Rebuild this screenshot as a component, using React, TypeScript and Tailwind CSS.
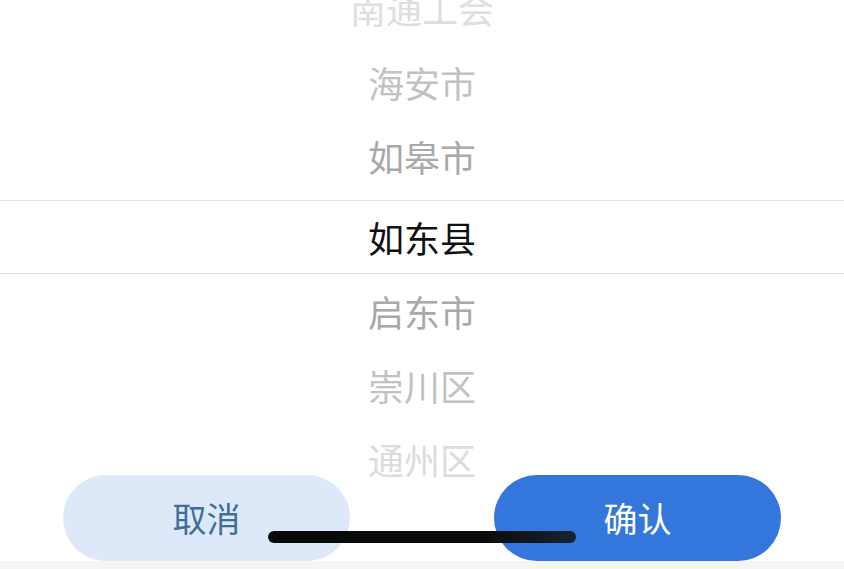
import React from "react";

const rows: { t: string; c: string; h: string }[] = [
  { t: "南通工会", c: "text-[#dedede]", h: "h-[74px]" },
  { t: "海安市", c: "text-[#c2c2c2]", h: "h-[74px]" },
  { t: "如皋市", c: "text-[#a9a9a9] pb-[7px]", h: "h-[81px]" },
  { t: "如东县", c: "text-[#111111] border-y border-[#e2e2e2]", h: "h-[74px]" },
  { t: "启东市", c: "text-[#a9a9a9]", h: "h-[74px]" },
  { t: "崇川区", c: "text-[#c2c2c2]", h: "h-[74px]" },
  { t: "通州区", c: "text-[#dcdcdc]", h: "h-[74px]" },
];

export default function App() {
  return (
    <div
      className="relative w-[844px] h-[569px] overflow-hidden bg-white flex flex-col"
      style={{ fontFamily: '"Noto Sans CJK SC", "Noto Sans", sans-serif' }}
    >
      <div className="h-[478px] overflow-hidden shrink-0">
        <div className="-mt-[29px] flex flex-col">
          {rows.map((r, i) => (
            <div
              key={i}
              className={`${r.h} flex items-center justify-center text-[36px] leading-none ${r.c}`}
            >
              {r.t}
            </div>
          ))}
        </div>
      </div>
      <div className="-mt-[3px] flex justify-between px-[63px] h-[86px] shrink-0">
        <button className="w-[287px] h-[86px] rounded-full bg-[#dde9f8] text-[#3f6e9c] text-[34px] leading-none">
          取消
        </button>
        <button className="w-[287px] h-[86px] rounded-full bg-[#3477dc] text-white text-[34px] leading-none">
          确认
        </button>
      </div>
      <div className="flex-1 bg-[#f5f5f5]" />
      <div className="absolute left-[268px] top-[531px] w-[308px] h-[12px] rounded-full bg-[linear-gradient(to_right,#0a0a0a_0%,#0a0a0a_70%,rgba(20,20,20,0.85)_100%)]" />
    </div>
  );
}
